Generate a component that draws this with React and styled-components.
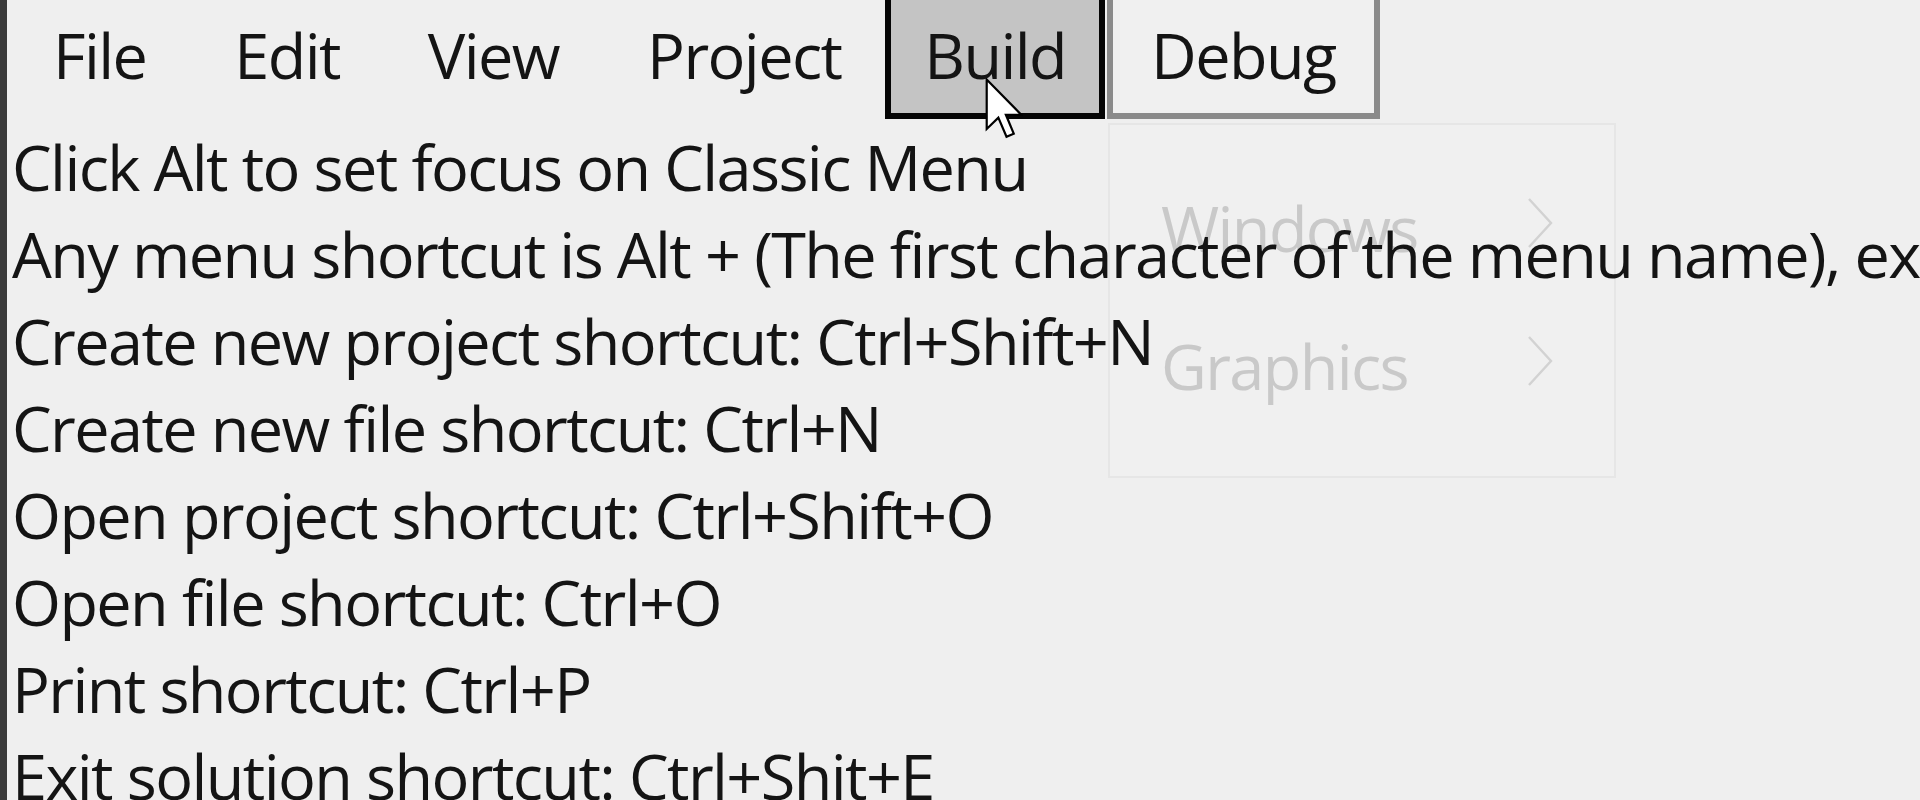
import React from "react";
import styled, { createGlobalStyle } from "styled-components";

const GlobalStyle = createGlobalStyle`
    html, body {
        margin: 0;
        padding: 0;
        background: #efefef;
        overflow: hidden;
    }
`;

const menus = ["File", "Edit", "View", "Project", "Build", "Debug"];

const lines = [
    "Click Alt to set focus on Classic Menu",
    "Any menu shortcut is Alt + (The first character of the menu name), ex for File menu Alt + F",
    "Create new project shortcut: Ctrl+Shift+N",
    "Create new file shortcut: Ctrl+N",
    "Open project shortcut: Ctrl+Shift+O",
    "Open file shortcut: Ctrl+O",
    "Print shortcut: Ctrl+P",
    "Exit solution shortcut: Ctrl+Shit+E",
];

const subMenu = ["Windows", "Graphics"];

const padFor = {idle: 38, pressed: 33, open: 38};

export default function App() {
    return (
        <>
            <GlobalStyle/>
            <Window>
                <MenuBar>
                    {menus.map((m) => (
                        <MenuItem key={m} $state={m === "Build" ? "pressed" : m === "Debug" ? "open" : "idle"}>
                            {m}
                        </MenuItem>
                    ))}
                </MenuBar>

                <Lines>
                    {lines.map((l) => (
                        <Line key={l}>{l}</Line>
                    ))}
                </Lines>

                {/* sous-menu de Debug en train d'apparaître (fondu) */}
                <Popup>
                    {subMenu.map((s) => (
                        <PopupItem key={s}>
                            <span>{s}</span>
                            <svg width="28" height="52" viewBox="0 0 28 52">
                                <path d="M3 2 L25 26 L3 50" fill="none" stroke="#d2d2d2" strokeWidth="2.4"/>
                            </svg>
                        </PopupItem>
                    ))}
                </Popup>

                <Cursor viewBox="0 0 12 19.4" width="38" height="61">
                    <path
                        d="M0.5 0.5 L0.5 16.2 L4.2 12.6 L6.8 18.7 L9.1 17.7 L6.6 11.7 L11.5 11.7 Z"
                        fill="#fff" stroke="#000" strokeWidth="0.7" strokeLinejoin="miter"
                    />
                </Cursor>
            </Window>
        </>
    );
}

/* ====== STYLES ====== */

const Window = styled.div`
    position: relative;
    height: 800px;
    overflow: hidden;
    border-left: 7px solid #3a3a3a;
    background: #efefef;
    font-family: "Open Sans", "Noto Sans", sans-serif;
    color: #141414;
`;

const MenuBar = styled.div`
    display: flex;
    align-items: flex-start;
    padding-left: 2px;
    height: 119px;
`;

const MenuItem = styled.div`
    box-sizing: border-box;
    height: 119px;
    padding: 11px ${({$state}) => padFor[$state]}px 0;
    font-size: 63px;
    line-height: 87px;
    letter-spacing: -1.6px;
    border: 6px solid transparent;
    border-top: none;
    ${({$state}) => $state === "pressed" && `
        background: #c4c4c4;
        border-color: #050505;
    `}
    ${({$state}) => $state === "open" && `
        background: #f0f0f0;
        border-color: #8a8a8a;
        margin-left: 2px;
    `}
`;

const Lines = styled.div`
    position: relative;
    z-index: 1;
    margin-top: 4px;
    padding-left: 5px;
`;

const Line = styled.div`
    font-size: 63px;
    line-height: 87px;
    letter-spacing: -1.6px;
    white-space: nowrap;
`;

const Popup = styled.div`
    position: absolute;
    left: 1101px;
    top: 123px;
    width: 508px;
    height: 355px;
    box-sizing: border-box;
    padding: 33px 60px 0 51px;
    background: rgba(243, 243, 243, 0.35);
    border: 2px solid #e6e6e6;
    color: #c9c9c9;
`;

const PopupItem = styled.div`
    display: flex;
    align-items: center;
    justify-content: space-between;
    height: 138px;
    font-size: 63px;
    letter-spacing: -1.6px;

    svg {
        margin-top: -8px;
    }
`;

const Cursor = styled.svg`
    position: absolute;
    left: 978px;
    top: 78px;
    z-index: 2;
`;
